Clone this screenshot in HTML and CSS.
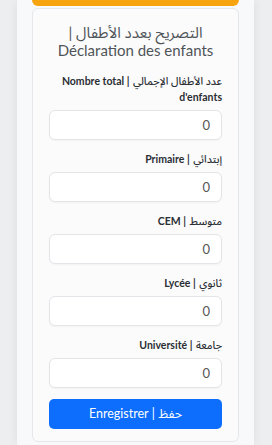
FILE: index.html
```html
<!DOCTYPE html>
<html lang="fr">
<head>
    <meta charset="UTF-8">
    <meta name="viewport" content="width=device-width, initial-scale=1.0">
    <title>Déclaration des enfants</title>
    <link rel="stylesheet" href="styles.css">
</head>
<body>
    <div class="panel">
        <!-- bas de la carte précédente -->
        <div class="top-bar"></div>

        <div class="card" dir="rtl">
            <h1 class="card-title">التصريح بعدد الأطفال | Déclaration des enfants</h1>

            <form class="kids-form">
                <div class="field">
                    <label for="total"><span class="ar">عدد الأطفال الإجمالي</span> | Nombre total d'enfants</label>
                    <input type="number" id="total" value="0">
                </div>
                <div class="field">
                    <label for="primaire"><span class="ar">إبتدائي</span> | Primaire</label>
                    <input type="number" id="primaire" value="0">
                </div>
                <div class="field">
                    <label for="cem"><span class="ar">متوسط</span> | CEM</label>
                    <input type="number" id="cem" value="0">
                </div>
                <div class="field">
                    <label for="lycee"><span class="ar">ثانوي</span> | Lycée</label>
                    <input type="number" id="lycee" value="0">
                </div>
                <div class="field">
                    <label for="univ"><span class="ar">جامعة</span> | Université</label>
                    <input type="number" id="univ" value="0">
                </div>
                <button type="submit" class="btn-save">حفظ | Enregistrer</button>
            </form>
        </div>
    </div>
</body>
</html>
```

FILE: styles.css
```css
/* reset */
* {
    box-sizing: border-box;
    margin: 0;
    padding: 0;
    font-family: Lato, 'Noto Sans Arabic', 'Noto Naskh Arabic', 'DejaVu Sans', sans-serif;
}

body {
    background: #eceef0;
}

/* conteneur principal */
.panel {
    width: 237px;
    min-height: 445px;
    margin-left: 17px;
    padding: 0 15px;
    background: #f8f9fa;
    box-shadow: 0 0 10px rgba(0, 0, 0, 0.07);
}

.top-bar {
    height: 6px;
    background: #f8a40f;
    border-radius: 0 0 6px 6px;
}

/* carte formulaire */
.card {
    margin-top: 2px;
    background: #fbfbfc;
    border: 1px solid #e5e7ea;
    border-radius: 6px;
    padding: 14px 16px 12px;
}

.card-title {
    text-align: center;
    font-size: 15px;
    line-height: 18px;
    font-weight: 400;
    color: #4f5458;
    margin-bottom: 14px;
}

.field {
    margin-bottom: 11px;
}

.field label {
    display: block;
    font-size: 10.5px;
    line-height: 16px;
    font-weight: 700;
    color: #2a2e33;
    margin-bottom: 5px;
}

.field label .ar {
    font-weight: 500;
    margin-left: 1px;
}

.field input {
    display: block;
    width: 100%;
    height: 30px;
    padding: 0 11px;
    border: 1px solid #e3e5e8;
    border-radius: 6px;
    background: #fff;
    font-size: 13px;
    color: #555;
    box-shadow: 0 1px 2px rgba(0, 0, 0, 0.04);
    -moz-appearance: textfield;
}

.field input::-webkit-inner-spin-button,
.field input::-webkit-outer-spin-button {
    -webkit-appearance: none;
    margin: 0;
}

.btn-save {
    display: block;
    width: 100%;
    height: 30px;
    margin-top: 1px;
    border: none;
    border-radius: 5px;
    background: #0d6efd;
    color: #fff;
    font-size: 12.5px;
}
```
